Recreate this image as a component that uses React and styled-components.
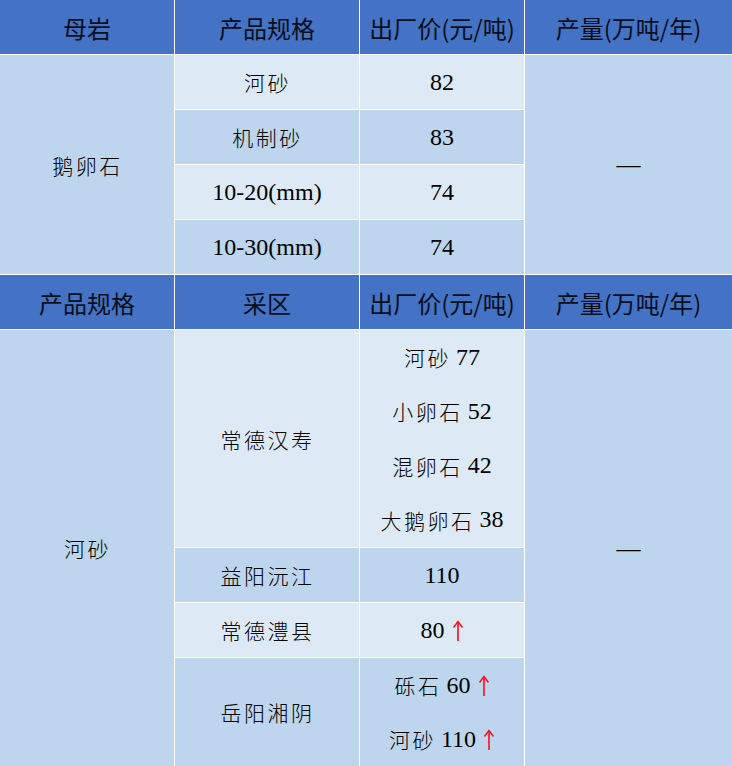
import React from "react";
import styled, { createGlobalStyle } from "styled-components";

const GlobalStyle = createGlobalStyle`
  html, body {
    margin: 0;
    padding: 0;
    background: #ffffff;
    overflow: hidden;
  }
`;

const Table = styled.div`
  display: grid;
  grid-template-columns: 174px 184px 164px 207px;
  grid-template-rows: repeat(6, 54px) 217px 54px 54px 108px;
  gap: 1px;
  width: 732px;
  background: #ffffff;
`;

const HeadCell = styled.div`
  display: flex;
  align-items: center;
  justify-content: center;
  background: #4472c4;
  color: #0a0f1c;
  font-family: "Noto Sans CJK SC", "Noto Sans", sans-serif;
  font-size: 24px;
  white-space: nowrap;
`;

const Cell = styled.div`
  grid-row: span ${(p) => p.$span || 1};
  display: flex;
  flex-direction: column;
  align-items: center;
  justify-content: center;
  background: ${(p) => (p.$tone === "light" ? "#ddeaf6" : "#bdd6ee")};
  color: #000000;
  font-family: "Liberation Serif", "Noto Sans CJK SC", serif;
  font-size: 24px;
  white-space: nowrap;
`;

const Line = styled.div`
  flex: 1;
  display: flex;
  align-items: center;
`;

const Zh = styled.span`
  font-size: 21px;
  font-weight: 300;
  letter-spacing: 2.5px;
  margin-right: -1px;
`;

const UpArrow = styled.svg`
  margin-left: 7px;
  margin-top: 1px;
  flex-shrink: 0;
`;

const Up = () => (
  <UpArrow width="12" height="22" viewBox="0 0 12 22" aria-label="上涨">
    <path d="M6 2 V21" stroke="#ff0a1e" strokeWidth="1.6" fill="none" />
    <path
      d="M1.5 7.5 L6 1.5 L10.5 7.5"
      stroke="#ff0a1e"
      strokeWidth="1.4"
      fill="none"
      strokeLinejoin="miter"
    />
  </UpArrow>
);

const sectionOne = [
  { spec: "河砂", price: "82", tone: "light" },
  { spec: "机制砂", price: "83", tone: "dark" },
  { spec: "10-20(mm)", price: "74", tone: "light" },
  { spec: "10-30(mm)", price: "74", tone: "dark" },
];

const isZh = (s) => /[\u4e00-\u9fff]/.test(s);

const Spec = ({ text }) => (isZh(text) ? <Zh>{text}</Zh> : <>{text}</>);

const PriceLine = ({ name, value, up }) => (
  <Line>
    {name && <Zh>{name}</Zh>}
    {name && "\u00a0"}
    {value}
    {up && <Up />}
  </Line>
);

export default function App() {
  return (
    <>
      <GlobalStyle />
      <Table>
        <HeadCell>母岩</HeadCell>
        <HeadCell>产品规格</HeadCell>
        <HeadCell>出厂价(元/吨)</HeadCell>
        <HeadCell>产量(万吨/年)</HeadCell>

        <Cell $span={4} $tone="dark">
          <Zh>鹅卵石</Zh>
        </Cell>
        {sectionOne.map((row, i) => (
          <React.Fragment key={i}>
            <Cell $tone={row.tone}>
              <Spec text={row.spec} />
            </Cell>
            <Cell $tone={row.tone}>{row.price}</Cell>
            {i === 0 && (
              <Cell $span={4} $tone="dark">
                —
              </Cell>
            )}
          </React.Fragment>
        ))}

        <HeadCell>产品规格</HeadCell>
        <HeadCell>采区</HeadCell>
        <HeadCell>出厂价(元/吨)</HeadCell>
        <HeadCell>产量(万吨/年)</HeadCell>

        <Cell $span={4} $tone="dark">
          <Zh>河砂</Zh>
        </Cell>
        <Cell $tone="light">
          <Zh>常德汉寿</Zh>
        </Cell>
        <Cell $tone="light">
          <PriceLine name="河砂" value="77" />
          <PriceLine name="小卵石" value="52" />
          <PriceLine name="混卵石" value="42" />
          <PriceLine name="大鹅卵石" value="38" />
        </Cell>
        <Cell $span={4} $tone="dark">
          —
        </Cell>

        <Cell $tone="dark">
          <Zh>益阳沅江</Zh>
        </Cell>
        <Cell $tone="dark">110</Cell>

        <Cell $tone="light">
          <Zh>常德澧县</Zh>
        </Cell>
        <Cell $tone="light">
          <PriceLine value="80" up />
        </Cell>

        <Cell $tone="dark">
          <Zh>岳阳湘阴</Zh>
        </Cell>
        <Cell $tone="dark">
          <PriceLine name="砾石" value="60" up />
          <PriceLine name="河砂" value="110" up />
        </Cell>
      </Table>
    </>
  );
}
